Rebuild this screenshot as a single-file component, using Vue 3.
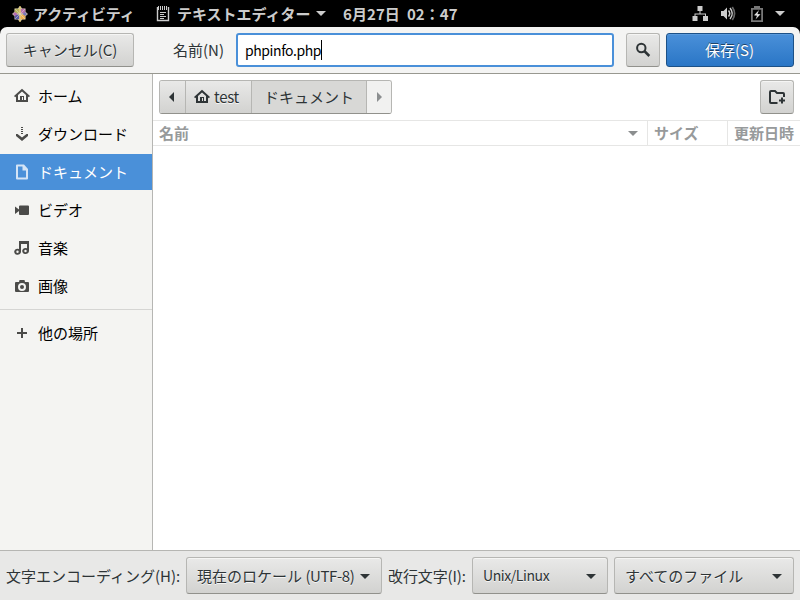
<template>
  <div class="screen">
    <div class="topbar">
      <svg class="logo" width="16" height="16" viewBox="0 0 16 16">
        <path d="M8 0l2.300 2.500H13.500V5.700L16 8l-2.500 2.300v3.200h-3.200L8 16l-2.300-2.500H2.500v-3.200L0 8l2.500-2.300V2.500h3.200z" fill="#cfc4a8" />
        <path d="M2.800 2.800h4.500v4.500H2.800z" fill="#b7b45c" />
        <path d="M8.700 2.800h4.500v4.500H8.700z" fill="#b873ae" />
        <path d="M2.800 8.700h4.500v4.500H2.800z" fill="#5b5ba8" />
        <path d="M8.700 8.700h4.500v4.500H8.700z" fill="#efb04e" />
        <path d="M1 8l2-2 2.500 2L3 10z" fill="#b56bb0" />
        <path d="M15 8l-2-2-2.500 2 2.500 2z" fill="#7777b5" />
        <path d="M8 0v16" stroke="#e8c860" stroke-width="1" />
        <path d="M3 3l10 10M13 3L3 13" stroke="#e6e0d8" stroke-width=".5" />
      </svg>
      <span class="activities">アクティビティ</span>
      <svg class="app-icon" width="14" height="16" viewBox="0 0 14 16" fill="none" stroke="#ccc">
        <path d="M1.500 1V14.500h11V1" stroke-width="1.400" />
        <path d="M2.500 0v4M4.500 0v4M6.500 0v4M8.500 0v4M10.500 0v4" />
        <path d="M4 6.500h6M4 8.500h4M4 10.500h6M4 12.500h4" />
      </svg>
      <span class="app-name">テキストエディター</span>
      <i class="arrow light"></i>
      <span class="clock">6月27日&nbsp; 02：47</span>
      <div class="status">
        <svg width="16" height="16" viewBox="0 0 16 16" fill="#ccc">
          <path d="M5.500 0h5v5h-5zM.5 10h5v5h-5zM11 10h5v5h-5z" />
          <path d="M7.500 5h1v3h-1zM2.500 7.500h11.500v1H2.500zM2.500 8h1v2h-1zM13 8h1v2h-1z" />
        </svg>
        <svg width="16" height="16" viewBox="0 0 16 16" fill="none">
          <path d="M1 5h2.500L7 1.500v12L3.500 10H1z" fill="#ccc" />
          <path d="M8.500 4.500q2.500 3 0 6M10 2q4.500 5.500 0 11" stroke="#ccc" stroke-width="1.500" />
          <path d="M12.300 1q4.500 6.500 0 13" stroke="#666" stroke-width="1.700" />
        </svg>
        <svg width="12" height="16" viewBox="0 0 12 16">
          <path d="M3 0h6v2h3v14H0V2h3zM1.800 3.800v10.400h8.400V3.800z" fill="#777" fill-rule="evenodd" />
          <path d="M8 4L3 9.300l3 .4L4.500 13.500 9.500 8.300l-3-.4z" fill="#ddd" />
        </svg>
        <i class="arrow light"></i>
      </div>
    </div>

    <div class="header">
      <button class="btn cancel">キャンセル(C)</button>
      <label class="name-label">名前(N)</label>
      <div class="entry"><span class="latin">phpinfo.php</span><i class="caret"></i></div>
      <button class="btn search">
        <svg width="16" height="16" viewBox="0 0 16 16" fill="none" stroke="#2e3436">
          <circle cx="6.300" cy="6" r="4.200" stroke-width="2" />
          <path d="M9.300 9l5 5" stroke-width="2.500" />
        </svg>
      </button>
      <button class="btn save">保存(S)</button>
    </div>

    <div class="body">
      <div class="sidebar">
        <div v-for="p in places" :key="p.name" class="place" :class="{ active: p.active }">
          <svg width="16" height="16" viewBox="0 0 16 16" fill="currentColor" fill-rule="evenodd">
            <path :d="p.icon" />
          </svg>
          <span>{{ p.name }}</span>
        </div>
        <div class="separator"></div>
        <div class="place">
          <svg width="16" height="16" viewBox="0 0 16 16" fill="currentColor">
            <path d="M7 3h2v4h4v2H9v4H7V9H3V7h4z" />
          </svg>
          <span>他の場所</span>
        </div>
      </div>

      <div class="main">
        <div class="pathrow">
          <div class="pathbar">
            <button class="seg back"><i class="left"></i></button>
            <button class="seg home">
              <svg width="16" height="16" viewBox="0 0 16 16" fill="#2e3436" fill-rule="evenodd">
                <path :d="homeIcon" />
              </svg>
              <span>test</span>
            </button>
            <button class="seg current">ドキュメント</button>
            <button class="seg next"><i class="right"></i></button>
          </div>
          <button class="btn new-folder">
            <svg width="18" height="16" viewBox="0 0 18 16" fill="none" stroke="#2e3436" stroke-width="2">
              <path d="M9.500 14H3q-1 0-1-1V3q0-1 1-1h4l2 2h6q1 0 1 1v3" />
              <path d="M14 8.500v6M11 11.500h6" />
            </svg>
          </button>
        </div>
        <div class="columns">
          <div class="col col-name">名前<i class="arrow grey"></i></div>
          <div class="col col-size">サイズ</div>
          <div class="col col-date">更新日時</div>
        </div>
        <div class="files"></div>
      </div>
    </div>

    <div class="footer">
      <span class="enc-label">文字エンコーディング(H):</span>
      <button class="btn combo encoding">
        <span>現在のロケール <span class="utf">(UTF-8)</span></span><i class="arrow"></i>
      </button>
      <span class="eol-label">改行文字(I):</span>
      <button class="btn combo eol"><span class="latin">Unix/Linux</span><i class="arrow"></i></button>
      <button class="btn combo filter"><span>すべてのファイル</span><i class="arrow"></i></button>
    </div>
  </div>
</template>

<script setup>
const homeIcon = 'M8 .8L0 8l1.200 1.300L2 8.600V14h12V8.600l.8.700L16 8zM8 3.400l4 3.600v5h-2V8H6v4H4V7zM8 9h1v3H8z'

const places = [
  { name: 'ホーム', icon: homeIcon },
  { name: 'ダウンロード', icon: 'M7 1h2v1H7zM7 3h2v1H7zM7 5h2v1H7zM7 7h2v1H7zM8 11.500L12.500 8H14v2l-6 5-6-5V8h1.500z' },
  { name: 'ドキュメント', active: true, icon: 'M3 .5h7l4 4.500v9.500q0 1-1 1H3q-1 0-1-1v-13q0-1 1-1zM4 2.500v11h8V6.500H8.500v-4z' },
  { name: 'ビデオ', icon: 'M1 4.500l4 3V4.500q0-1 1-1h8q1 0 1 1v7.500q0 1-1 1H6q-1 0-1-1V9l-4 3z' },
  { name: '音楽', icon: 'M5 1H15v10a3.400 3 0 1 1-2-2.700V4H7v7.800a3.400 3 0 1 1-2-2.700zM3.500 10.600a1.200 1.200 0 1 0 0 2.400a1.200 1.200 0 1 0 0-2.400zM11.500 9.800a1.200 1.200 0 1 0 0 2.400a1.200 1.200 0 1 0 0-2.400z' },
  { name: '画像', icon: 'M5.500 2h5L11 4h3q1 0 1 1v8q0 1-1 1H2q-1 0-1-1V5q0-1 1-1h3zM8 5a4 4 0 1 0 0 8a4 4 0 1 0 0-8zM8 7a2 2 0 1 1 0 4a2 2 0 1 1 0-4z' }
]
</script>

<style>
body {
  margin: 0;
  overflow: hidden;
}
</style>

<style scoped>
* {
  box-sizing: border-box;
}

.screen {
  width: 800px;
  height: 600px;
  display: flex;
  flex-direction: column;
  background: #000;
  color: #2e3436;
  font-family: "Noto Sans CJK JP", "Noto Sans", sans-serif;
  font-size: 15px;
  line-height: 22px;
  white-space: nowrap;
}

svg {
  display: block;
  flex: none;
}

button {
  font: inherit;
  color: inherit;
  padding: 0;
}

.latin {
  font-size: 14px;
  letter-spacing: -0.42px;
}

.utf {
  letter-spacing: -0.4px;
}

.topbar {
  height: 27px;
  flex: none;
  display: flex;
  align-items: center;
  color: #ccc;
  font-weight: bold;
}

.logo {
  margin-left: 12px;
}

.activities {
  width: 101px;
  margin: 1px 0 0 5px;
  letter-spacing: -0.1px;
}

.app-icon {
  margin-left: 22px;
}

.app-name {
  width: 134px;
  margin: 1px 0 0 7px;
}

.topbar > .arrow {
  margin-left: 5px;
}

.clock {
  margin: 1px 0 0 17px;
  letter-spacing: 0.08px;
}

.status {
  margin-left: auto;
  padding-right: 15px;
  display: flex;
  align-items: center;
}

.status svg + svg {
  margin-left: 12px;
}

.status svg:nth-child(3) {
  margin-left: 15px;
}

.status .arrow {
  margin-left: 12px;
}

.arrow {
  flex: none;
  border: 5px solid transparent;
  border-top-color: #2e3436;
  border-bottom: 0;
}

.arrow.light {
  border-top-color: #ccc;
}

.arrow.grey {
  border-top-color: #8b8e8f;
}

.header {
  height: 47px;
  flex: none;
  display: flex;
  align-items: flex-start;
  padding: 6px;
  background: #f4f4f3;
  border-bottom: 1px solid #989890;
  border-radius: 7px 7px 0 0;
}

.btn {
  height: 34px;
  display: flex;
  align-items: center;
  justify-content: center;
  border: 1px solid #b6b6b3;
  border-bottom-color: #91918c;
  border-radius: 3px;
  background: linear-gradient(#e9e9e8, #d2d2d0);
  box-shadow: inset 0 1px #f5f5f4;
  text-shadow: 0 1px rgba(255, 255, 255, 0.77);
}

.cancel {
  width: 128px;
}

.name-label {
  width: 51px;
  margin: 6px 12px 0 39px;
}

.entry {
  width: 378px;
  height: 34px;
  display: flex;
  align-items: center;
  padding-left: 7px;
  border: 2px solid #4a90d9;
  border-radius: 3px;
  background: #fff;
  color: #000;
}

.caret {
  width: 1px;
  height: 20px;
  background: #000;
}

.search {
  width: 34px;
  margin: 0 6px 0 12px;
}

.save {
  width: 128px;
  padding-right: 1px;
  color: #fff;
  border-color: #1c5187;
  background: linear-gradient(#4a90d9, #2a76c6);
  box-shadow: inset 0 1px #5b9bdd;
  text-shadow: 0 -1px rgba(0, 0, 0, 0.5);
}

.body {
  flex: 1;
  display: flex;
  min-height: 0;
}

.sidebar {
  width: 153px;
  padding-top: 4px;
  background: #f4f4f2;
  border-right: 1px solid #b6b6b3;
  color: #000;
}

.place {
  height: 36px;
  margin-bottom: 2px;
  display: flex;
  align-items: center;
  gap: 8px;
  padding-left: 14px;
}

.place svg {
  color: #4b4b49;
}

.place.active {
  background: #4a90d9;
  color: #fff;
}

.place.active svg {
  color: #d4e4f6;
}

.separator {
  height: 1px;
  margin: 5px 0;
  background: #d5d5d3;
}

.main {
  flex: 1;
  display: flex;
  flex-direction: column;
  background: #fff;
}

.pathrow {
  height: 46px;
  padding: 6px 6px 0;
  display: flex;
  justify-content: space-between;
}

.pathbar {
  width: 233px;
  height: 34px;
  display: flex;
  border: 1px solid #b6b6b3;
  border-bottom-color: #91918c;
  border-radius: 3px;
  overflow: hidden;
}

.seg {
  display: flex;
  align-items: center;
  justify-content: center;
  border: 0;
  border-right: 1px solid #b6b6b3;
  background: linear-gradient(#e9e9e8, #d2d2d0);
  text-shadow: 0 1px rgba(255, 255, 255, 0.77);
}

.back {
  width: 26px;
}

.home {
  width: 66px;
  gap: 4px;
  justify-content: flex-start;
  padding-left: 8px;
}

.home span {
  letter-spacing: -0.3px;
}

.current {
  width: 115px;
  background: #d8d8d6;
  text-shadow: none;
}

.next {
  width: 24px;
  border-right: 0;
  background: #f1f1f0;
}

.left,
.right {
  border: 5px solid transparent;
  border-left: 0;
  border-right: 5px solid #2e3436;
}

.left {
  margin-right: 2px;
}

.right {
  border-right: 0;
  border-left: 5px solid #8b8e8f;
}

.new-folder {
  width: 34px;
}

.columns {
  height: 26px;
  flex: none;
  display: flex;
  border: solid #e6e6e5;
  border-width: 1px 0;
  color: #979a9b;
  font-weight: bold;
}

.col {
  display: flex;
  align-items: center;
  padding: 0 9px 0 6px;
}

.col + .col {
  border-left: 1px solid #e6e6e5;
}

.col-name {
  width: 494px;
  justify-content: space-between;
}

.col-size {
  width: 80px;
}

.col-date {
  flex: 1;
  padding-right: 0;
}

.files {
  flex: 1;
}

.footer {
  height: 50px;
  flex: none;
  display: flex;
  align-items: center;
  padding: 0 6px;
  background: #e8e8e7;
  border-top: 1px solid #b6b6b3;
}

.enc-label {
  width: 174px;
  margin: 1px 6px 0 0;
}

.combo {
  height: 37px;
  justify-content: space-between;
  padding: 0 11px 0 10px;
}

.combo > span {
  margin-top: 1px;
}

.combo .arrow {
  margin-top: 2px;
}

.encoding {
  width: 196px;
}

.eol-label {
  width: 78px;
  margin: 1px 6px 0;
  letter-spacing: -0.1px;
}

.eol {
  width: 136px;
}

.eol > .latin {
  margin: 0 0 2px;
}

.filter {
  width: 180px;
  margin-left: 6px;
}
</style>
